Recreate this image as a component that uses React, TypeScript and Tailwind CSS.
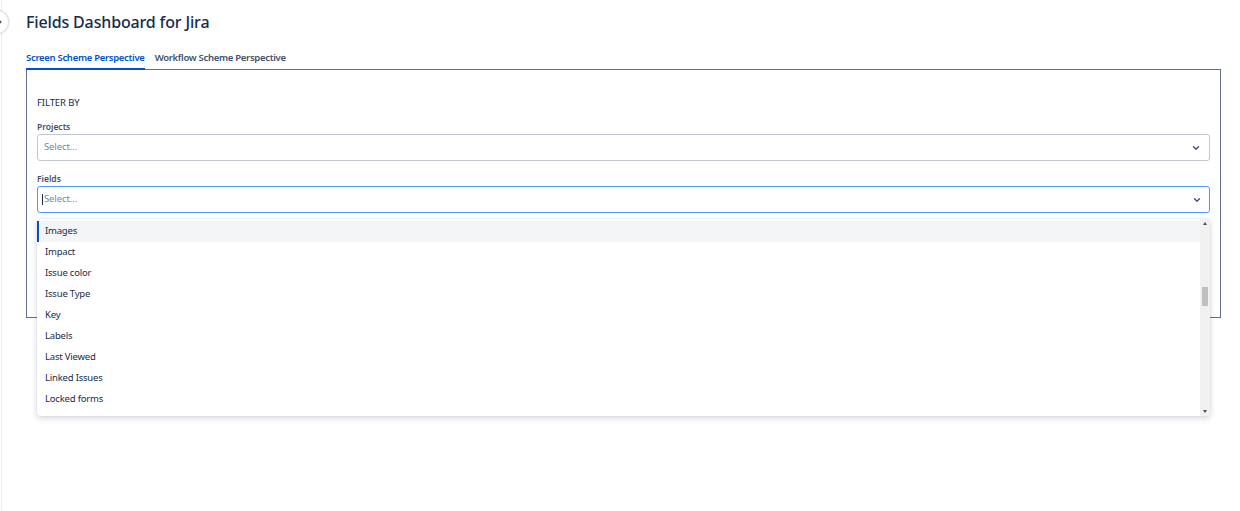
const OPTIONS = [
  "Images",
  "Impact",
  "Issue color",
  "Issue Type",
  "Key",
  "Labels",
  "Last Viewed",
  "Linked Issues",
  "Locked forms",
];

function Caret() {
  return (
    <svg width="8" height="8" viewBox="0 0 8 8" className="text-[#42526e]">
      <path d="M1.5 2.8 4 5.2 6.5 2.8" fill="none" stroke="currentColor" strokeWidth="1.4" strokeLinecap="round" strokeLinejoin="round" />
    </svg>
  );
}

export default function App() {
  return (
    <div className="relative h-[511px] w-[1240px] overflow-hidden bg-white font-['Noto_Sans',sans-serif] text-[#172b4d]">
      {/* sidebar edge + collapse button */}
      <div className="absolute left-0 top-0 h-full w-[2px] border-r border-[#ebecf0]" />
      <div className="absolute left-[-15px] top-[10px] flex h-[24px] w-[24px] items-center justify-end rounded-full border border-[#dfe1e6] bg-white pr-[5px] shadow-[0_0_2px_rgba(9,30,66,0.2)]">
        <svg width="6" height="6" viewBox="0 0 6 6">
          <path d="M2 1 4 3 2 5" fill="none" stroke="#42526e" strokeWidth="1.2" />
        </svg>
      </div>

      <div className="pl-[26px] pr-[19px] pt-[11px]">
        <h1 className="text-[16px] font-medium leading-[22px] tracking-[-0.15px]">Fields Dashboard for Jira</h1>

        <div className="mt-[18px] flex gap-[10px] text-[9.5px] font-semibold leading-[14px] tracking-[-0.3px]">
          <div className="border-b-2 border-[#0052cc] pb-[3px] text-[#0052cc]">Screen Scheme Perspective</div>
          <div className="pb-[3px] text-[#42526e]">Workflow Scheme Perspective</div>
        </div>

        <div className="mt-[-1px] h-[249px] border border-[#626f86] px-[10px] pt-[26px]">
          <div className="text-[9.5px] leading-[14px] tracking-[-0.1px] text-[#172b4d]">FILTER BY</div>

          <div className="mt-[11px] text-[8.5px] font-semibold leading-[12px] text-[#42526e]">Projects</div>
          <div className="mt-[1px] flex h-[27px] items-center justify-between rounded-[3px] border border-[#c1c7d0] pl-[6px] pr-[9px]">
            <span className="text-[9.5px] tracking-[-0.1px] text-[#7a869a]">Select...</span>
            <Caret />
          </div>

          <div className="mt-[12px] text-[8.5px] font-semibold leading-[12px] text-[#42526e]">Fields</div>
          <div className="relative mt-[1px]">
            <div className="flex h-[27px] items-center justify-between rounded-[3px] border-[1.5px] border-[#4c9aff] pl-[4px] pr-[8.5px]">
              <span className="flex items-center text-[9.5px] tracking-[-0.1px] text-[#7a869a]">
                <span className="mr-[1px] inline-block h-[11px] w-px bg-[#172b4d]" />
                Select...
              </span>
              <Caret />
            </div>

            {/* open menu */}
            <div className="absolute left-0 right-0 top-[33px] z-10 flex h-[197px] rounded-[3px] bg-white shadow-[0_2px_6px_rgba(9,30,66,0.18),0_0_1px_rgba(9,30,66,0.2)]">
              <div className="flex-1 pt-[2px]">
                {OPTIONS.map((o, i) => (
                  <div
                    key={o}
                    className={`flex h-[21px] items-center text-[9.5px] tracking-[-0.2px] ${
                      i === 0 ? "border-l-2 border-[#0052cc] bg-[#f4f5f7] pl-[6px]" : "pl-[8px]"
                    }`}
                  >
                    {o}
                  </div>
                ))}
              </div>
              <div className="relative w-[10px] bg-[#f1f1f1]">
                <div className="absolute left-[3px] top-[3px] h-0 w-0 border-x-[2px] border-b-[3px] border-x-transparent border-b-[#505050]" />
                <div className="absolute left-[2px] top-[68px] h-[19px] w-[6px] bg-[#c1c1c1]" />
                <div className="absolute bottom-[3px] left-[3px] h-0 w-0 border-x-[2px] border-t-[3px] border-x-transparent border-t-[#505050]" />
              </div>
            </div>
          </div>
        </div>
      </div>
    </div>
  );
}
